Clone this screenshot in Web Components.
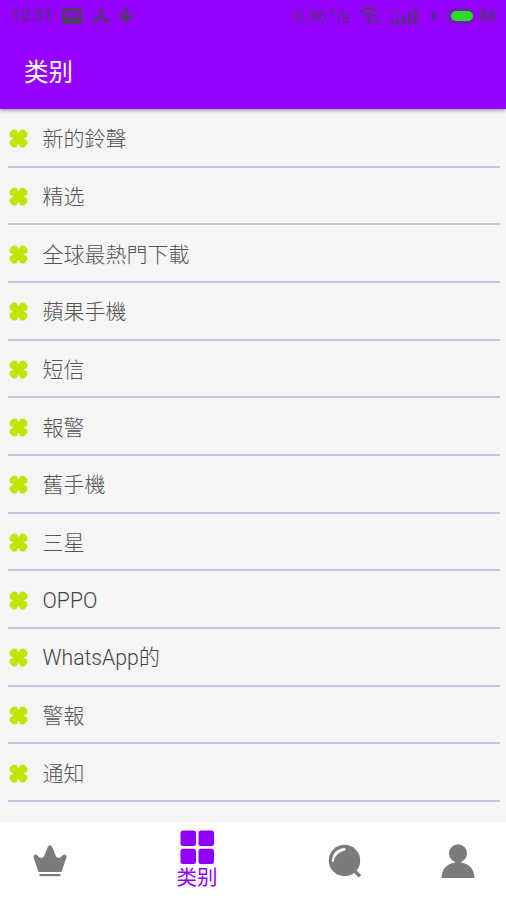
<!DOCTYPE html>
<html lang="zh">
<head>
<meta charset="utf-8">
<title>类别</title>
<style>
  body {
    margin: 0;
    width: 506px;
    height: 900px;
    overflow: hidden;
    background: #f5f5f5;
    font-family: Roboto, "Noto Sans CJK SC", sans-serif;
  }
</style>
</head>
<body>
<ringtone-app>
  <status-bar slot="top" time="12:31" speed="0.36" battery="86"></status-bar>
  <app-bar slot="top">类别</app-bar>
  <category-row>新的鈴聲</category-row>
  <category-row>精选</category-row>
  <category-row>全球最熱門下載</category-row>
  <category-row>蘋果手機</category-row>
  <category-row>短信</category-row>
  <category-row>報警</category-row>
  <category-row>舊手機</category-row>
  <category-row>三星</category-row>
  <category-row latin>OPPO</category-row>
  <category-row latin>WhatsApp的</category-row>
  <category-row>警報</category-row>
  <category-row>通知</category-row>
  <bottom-nav slot="bottom">
    <nav-item icon="crown"></nav-item>
    <nav-item icon="grid" active>类别</nav-item>
    <nav-item icon="search"></nav-item>
    <nav-item icon="person"></nav-item>
  </bottom-nav>
</ringtone-app>

<script>
(function () {
  function define(name, html, setup) {
    const template = document.createElement("template");
    template.innerHTML = html;
    customElements.define(name, class extends HTMLElement {
      constructor() {
        super();
        this.attachShadow({ mode: "open" });
        this.shadowRoot.appendChild(template.content.cloneNode(true));
      }

      connectedCallback() {
        if (setup) setup(this, this.shadowRoot);
      }
    });
  }

  define("ringtone-app", `
    <style>
      :host {
        display: flex;
        flex-direction: column;
        height: 900px;
      }
      header {
        flex: none;
        background: #9600ff;
        box-shadow: 0 1px 4px rgba(0, 0, 0, 0.45);
        z-index: 1;
      }
      main {
        flex: 1;
        min-height: 0;
        overflow: hidden;
        padding-top: 1.1px;
      }
    </style>
    <header><slot name="top"></slot></header>
    <main><slot></slot></main>
    <slot name="bottom"></slot>
  `);

  define("status-bar", `
    <style>
      :host {
        display: flex;
        align-items: center;
        box-sizing: border-box;
        height: 33px;
        padding: 0 9px 1px 11px;
        color: #58317a;
        font-size: 17px;
        line-height: 20px;
      }
      #time { width: 51px; font-weight: 500; font-size: 16.500px; }
      #speed { margin-left: auto; }
      .unit { width: 20px; margin: 0 9px 0 3px; }
      svg { display: block; flex: none; }
      #battery { margin-left: 3px; font-weight: 500; font-size: 16px; }
    </style>
    <span id="time"></span>
    <svg width="20" height="16" viewBox="0 0 20 16">
      <rect width="20" height="16" rx="2" fill="#4f3d66"/>
      <path d="M2.500 3h5l3 4.500L12.500 3h5v2l-5 6-4-3.500-3 3z" fill="#9600ff"/>
      <path d="M13 3.500h2v2h-2z" fill="#4f3d66"/>
    </svg>
    <svg width="18" height="17" viewBox="0 0 18 17" style="margin-left:10px">
      <g fill="none" stroke="#523b63" stroke-width="2.4"><path d="M9 3v7M9 9l-6 4M9 9l6 4"/></g>
      <g fill="#523b63"><circle cx="9" cy="3" r="2.3"/><circle cx="3" cy="13" r="2.3"/><circle cx="15" cy="13" r="2.3"/></g>
    </svg>
    <svg width="14" height="18" viewBox="0 0 14 18" style="margin-left:9px">
      <path d="M7 1v16M2 6v5h10V6" fill="none" stroke="#523b63" stroke-width="2.6"/>
      <path d="M4 4l3-4 3 4zM3 11h8l-4 4z" fill="#523b63"/>
    </svg>
    <span id="speed"></span>
    <svg class="unit" width="20" height="16" viewBox="0 0 20 16" fill="none" stroke="#58317a" stroke-width="1.5">
      <path d="M2 1v5M5 1L2 4l3 2M13 1L8 14M18 7h-4v3h4v4h-5"/>
    </svg>
    <svg width="22" height="18" viewBox="0 0 22 18" fill="none" stroke="#58317a" stroke-width="2.3">
      <path d="M1 5q9-8 18 0M4 9q6-5 12 0M7 13q3-3 6 0"/>
      <circle cx="10" cy="15" r="1.7" fill="#58317a" stroke="none"/>
      <path d="M17 11v5M15 14l2 2 3-2" stroke-width="1.6"/>
    </svg>
    <svg width="27" height="17" viewBox="0 0 27 17" fill="#58317a" style="margin-left:9px">
      <path d="M0 12h3v5H0zM6 10h3v7H6zM12 7h3v10h-3zM18 4h3v13h-3zM24 0h3v17h-3z"/>
      <path d="M1 1h3v2H1zM5 3h4v2H5z"/>
    </svg>
    <svg width="8" height="10" viewBox="0 0 8 10" fill="#58317a" style="margin:0 8px 0 13px">
      <path d="M4 0l1.500 3L8 5 5.500 7 4 10 2.500 7 0 5l2.500-2z"/>
    </svg>
    <svg width="30" height="16" viewBox="0 0 30 16">
      <rect x="2" y="1" width="26" height="14" rx="7" fill="none" stroke="#682499" stroke-width="2"/>
      <rect x="5" y="3" width="22" height="10" rx="5" fill="#29dc28"/>
      <path d="M1 6v4" stroke="#682499" stroke-width="2"/>
    </svg>
    <span id="battery"></span>
  `, (el, root) => {
    for (const key of ["time", "speed", "battery"]) {
      root.getElementById(key).textContent = el.getAttribute(key);
    }
  });

  define("app-bar", `
    <style>
      :host {
        display: flex;
        align-items: center;
        box-sizing: border-box;
        height: 76px;
        padding: 0 24px 2px;
        color: #fff;
        font-size: 24.500px;
      }
    </style>
    <span><slot></slot></span>
  `);

  define("category-row", `
    <style>
      :host {
        display: flex;
        align-items: center;
        box-sizing: border-box;
        height: 57.66px;
        margin: 0 6px 0 8px;
        border-bottom: 2px solid #c6c2e4;
        color: #555;
        font-size: 21px;
        font-weight: 300;
        line-height: 30px;
      }
      :host([latin]) {
        color: #444;
        font-size: 21.200px;
      }
      span { padding-top: 3px; }
      svg { flex: none; margin: 2px 15px 0 0.500px; }
    </style>
    <svg width="19" height="19" viewBox="0 0 19 19" fill="#bfe600">
      <path d="M5 5l9 9M14 5l-9 9" stroke="#bfe600" stroke-width="7.500"/>
      <circle cx="5.400" cy="3.600" r="3.100"/><circle cx="3.600" cy="5.400" r="3.100"/>
      <circle cx="13.600" cy="3.600" r="3.100"/><circle cx="15.400" cy="5.400" r="3.100"/>
      <circle cx="5.400" cy="15.400" r="3.100"/><circle cx="3.600" cy="13.600" r="3.100"/>
      <circle cx="13.600" cy="15.400" r="3.100"/><circle cx="15.400" cy="13.600" r="3.100"/>
    </svg>
    <span><slot></slot></span>
  `);

  define("bottom-nav", `
    <style>
      :host {
        display: grid;
        grid-template-columns: 99px 196px 99px 127px;
        flex: none;
        height: 78px;
        background: #fff;
      }
    </style>
    <slot></slot>
  `);

  const icons = {
    crown: `<path d="M5.500 28L.600 13.500Q0 10.500 2.500 10.500 4 10.300 5 12q3 3.500 6 .5L14.800 3q2.200-3.500 4.400 0L23 12.500q3 3 6-.5 1-1.700 2.500-1.500 2.500 0 1.900 3L28.500 28z"/><path d="M6.500 30h21v2.200h-21z"/>`,
    grid: `<rect x=".5" y=".5" width="15.500" height="15.500" rx="2.500"/><rect x="18.500" y=".5" width="15.500" height="15.500" rx="2.500"/><rect x=".5" y="18.700" width="15.500" height="15.300" rx="2.500"/><rect x="18.500" y="18.700" width="15.500" height="15.300" rx="2.500"/>`,
    search: `<circle cx="16.500" cy="16.500" r="15.700"/><path d="M25.500 26l6.500 6.300" stroke="#7b7b7b" stroke-width="3.400"/><path d="M4 18Q4 5.500 16.500 4L18 6Q7 8.500 5.500 18z" fill="#fff"/>`,
    person: `<circle cx="17" cy="9.300" r="9"/><path d="M14 16h6v2.600Q33 21 33.500 34H.5Q1 21 14 18.600z"/>`
  };

  define("nav-item", `
    <style>
      :host {
        display: flex;
        flex-direction: column;
        align-items: center;
        padding-top: 22px;
        color: #7b7b7b;
        font-size: 20.500px;
        line-height: 28px;
      }
      :host([active]) {
        padding-top: 8px;
        color: #9000fa;
      }
      svg { display: block; flex: none; fill: currentColor; }
    </style>
    <svg width="34" height="34" viewBox="0 0 34 34"></svg>
    <span><slot></slot></span>
  `, (el, root) => {
    root.querySelector("svg").innerHTML = icons[el.getAttribute("icon")];
  });
})();
</script>
</body>
</html>
